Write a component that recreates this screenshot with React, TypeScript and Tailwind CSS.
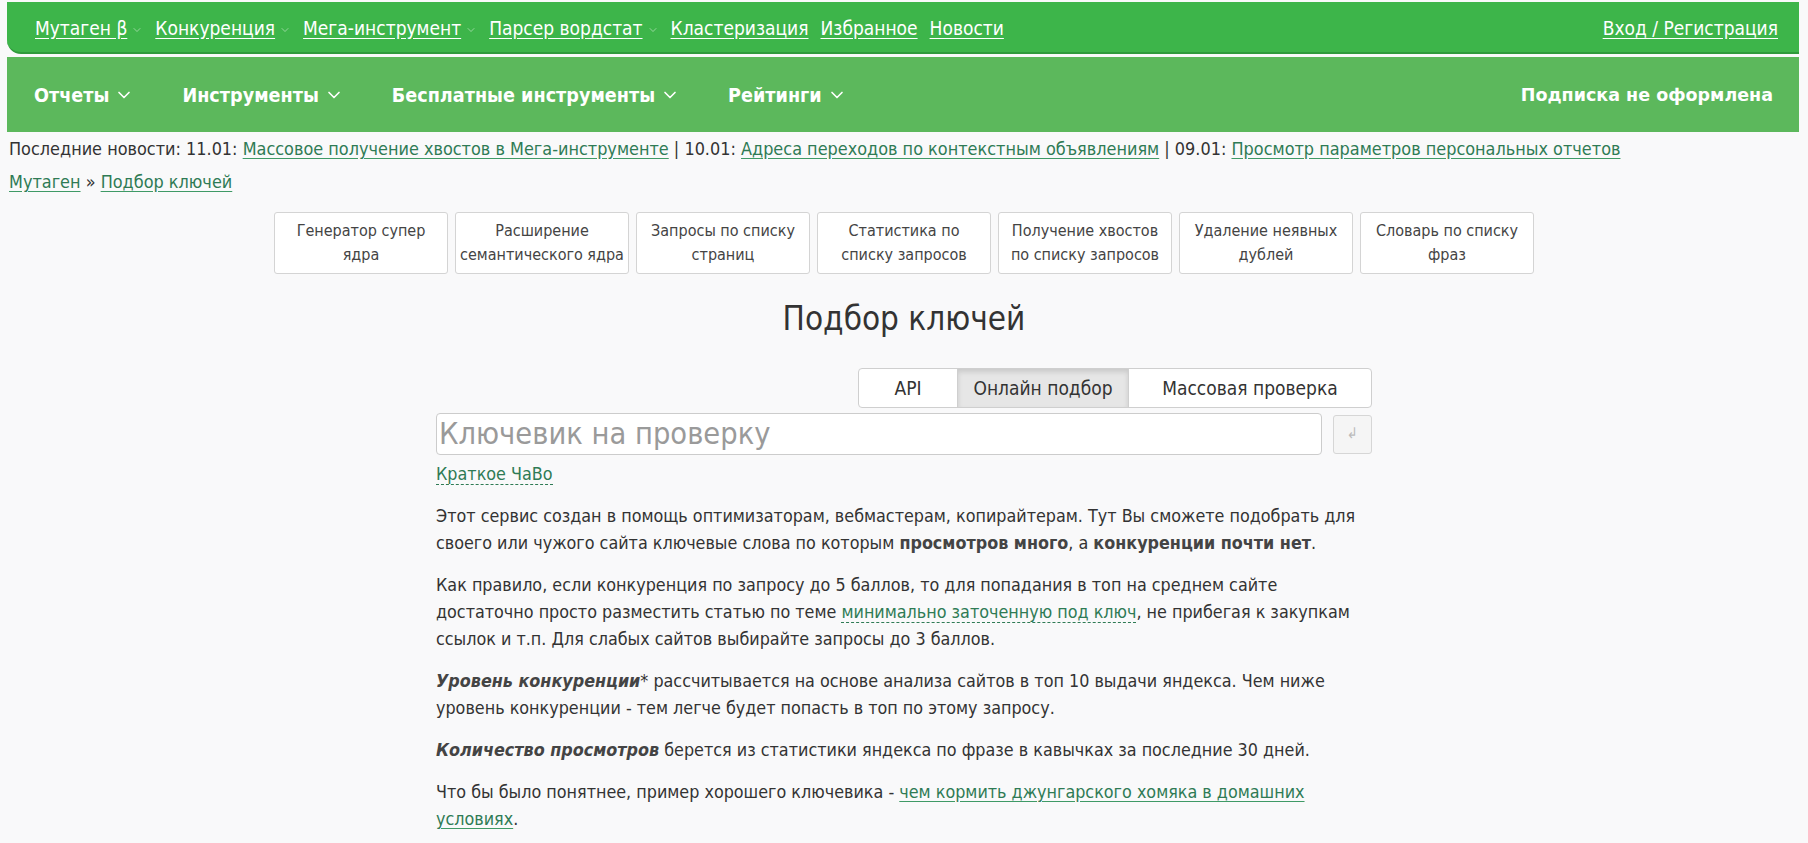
import { ChevronDown } from 'lucide-react'

const topLinks = [
  { label: 'Мутаген β', drop: true },
  { label: 'Конкуренция', drop: true },
  { label: 'Мега-инструмент', drop: true },
  { label: 'Парсер вордстат', drop: true },
  { label: 'Кластеризация', drop: false },
  { label: 'Избранное', drop: false },
  { label: 'Новости', drop: false }
]

const menu = ['Отчеты', 'Инструменты', 'Бесплатные инструменты', 'Рейтинги']

const tools = [
  ['Генератор супер', 'ядра'],
  ['Расширение', 'семантического ядра'],
  ['Запросы по списку', 'страниц'],
  ['Статистика по', 'списку запросов'],
  ['Получение хвостов', 'по списку запросов'],
  ['Удаление неявных', 'дублей'],
  ['Словарь по списку', 'фраз']
]

const link = 'text-[#2f7b55] underline decoration-[#3f9a66] underline-offset-[3px]'

const App = () => {
  return (
    <div className="min-h-screen bg-[#f9f9fa] text-[#333] font-['DejaVu_Sans_Condensed','DejaVu_Sans',sans-serif] pt-[2px]">
      {/* верхняя полоса */}
      <div className="ml-[7px] mr-[9px] h-[52px] bg-[#3db54a] rounded-bl-[14px] border-b-2 border-[#2f9a3c] flex items-center justify-between pl-[28px] pr-[21px] pt-[2px] text-white text-[19px]">
        <div className="flex items-center gap-[12px]">
          {topLinks.map((l) => (
            <span key={l.label} className="flex items-center gap-[4px]">
              <span className="underline underline-offset-[3px]">{l.label}</span>
              {l.drop && <ChevronDown size={12} strokeWidth={1.5} className="text-white/60 mt-[3px]" />}
            </span>
          ))}
        </div>
        <span className="underline underline-offset-[3px]">Вход / Регистрация</span>
      </div>

      {/* меню */}
      <div className="ml-[7px] mr-[9px] mt-[3px] h-[75px] bg-[#5cb85c] flex items-center justify-between pl-[27px] pr-[26px] pt-[2px] text-white">
        <div className="flex items-center gap-[48px] text-[19.6px] font-bold">
          {menu.map((m) => (
            <span key={m} className="flex items-center gap-[5px]">
              {m}
              <ChevronDown size={20} strokeWidth={2} />
            </span>
          ))}
        </div>
        <span className="font-['DejaVu_Sans',sans-serif] font-bold text-[17.5px]">Подписка не оформлена</span>
      </div>

      {/* новости */}
      <div className="px-[9px] mt-[5px] text-[17.9px] leading-[24px] whitespace-nowrap">
        Последние новости: 11.01: <span className={link}>Массовое получение хвостов в Мега-инструменте</span> | 10.01:{' '}
        <span className={link}>Адреса переходов по контекстным объявлениям</span> | 09.01:{' '}
        <span className={link}>Просмотр параметров персональных отчетов</span>
      </div>
      <div className="px-[9px] mt-[9px] text-[17.9px] leading-[24px]">
        <span className={link}>Мутаген</span> » <span className={link}>Подбор ключей</span>
      </div>

      {/* инструменты */}
      <div className="mt-[18px] flex justify-center gap-[7px]">
        {tools.map(([a, b]) => (
          <div
            key={a}
            className="w-[174px] h-[62px] bg-white border border-[#d4d4d4] rounded-[3px] flex flex-col items-center justify-center text-[16px] leading-[24px] text-[#444]"
          >
            <span>{a}</span>
            <span>{b}</span>
          </div>
        ))}
      </div>

      <div className="w-[936px] mx-auto">
        <h1 className="mt-[25px] text-center text-[33px] leading-[40px] text-[#333]">Подбор ключей</h1>

        <div className="mt-[29px] flex justify-end">
          <div className="flex h-[40px] border border-[#cfcfcf] rounded-[4px] bg-white text-[19px] overflow-hidden">
            <div className="w-[98px] flex items-center justify-center">API</div>
            <div className="w-[172px] flex items-center justify-center bg-[#e6e6e6] border-x border-[#cfcfcf] shadow-[inset_0_3px_5px_rgba(0,0,0,0.125)]">
              Онлайн подбор
            </div>
            <div className="w-[242px] flex items-center justify-center">Массовая проверка</div>
          </div>
        </div>

        <div className="mt-[5px] flex items-center gap-[11px]">
          <input
            className="flex-1 h-[42px] bg-white border border-[#cccccc] rounded-[4px] px-[2px] text-[30.5px] placeholder:text-[#9a9a9a] outline-none"
            placeholder="Ключевик на проверку"
          />
          <div className="w-[39px] h-[39px] bg-[#f5f5f5] border border-[#d6d6d6] rounded-[3px] flex items-end justify-center pb-[8px] text-[#bbb] text-[15px]">
            ↲
          </div>
        </div>

        <div className="mt-[7px] text-[17.8px] leading-[24px]">
          <span className="text-[#2f7b55] border-b border-dashed border-[#2f7b55]">Краткое ЧаВо</span>
        </div>

        <div className="mt-[16px] text-[17.8px] leading-[27px] text-[#333] space-y-[15px]">
          <p>
            Этот сервис создан в помощь оптимизаторам, вебмастерам, копирайтерам. Тут Вы сможете подобрать для своего
            или чужого сайта ключевые слова по которым <b className="text-[#444]">просмотров много</b>, а{' '}
            <b className="text-[#444]">конкуренции почти нет</b>.
          </p>
          <p>
            Как правило, если конкуренция по запросу до 5 баллов, то для попадания в топ на среднем сайте достаточно
            просто разместить статью по теме{' '}
            <span className="text-[#2f7b55] border-b border-dashed border-[#2f7b55]">минимально заточенную под ключ</span>,
            не прибегая к закупкам ссылок и т.п. Для слабых сайтов выбирайте запросы до 3 баллов.
          </p>
          <p>
            <b className="text-[#444]">
              <i>Уровень конкуренции</i>
            </b>
            * рассчитывается на основе анализа сайтов в топ 10 выдачи яндекса. Чем ниже уровень конкуренции - тем
            легче будет попасть в топ по этому запросу.
          </p>
          <p>
            <b className="text-[#444]">
              <i>Количество просмотров</i>
            </b>{' '}
            берется из статистики яндекса по фразе в кавычках за последние 30 дней.
          </p>
          <p>
            Что бы было понятнее, пример хорошего ключевика -{' '}
            <span className={link}>чем кормить джунгарского хомяка в домашних условиях</span>.
          </p>
        </div>
      </div>
    </div>
  )
}

export default App
